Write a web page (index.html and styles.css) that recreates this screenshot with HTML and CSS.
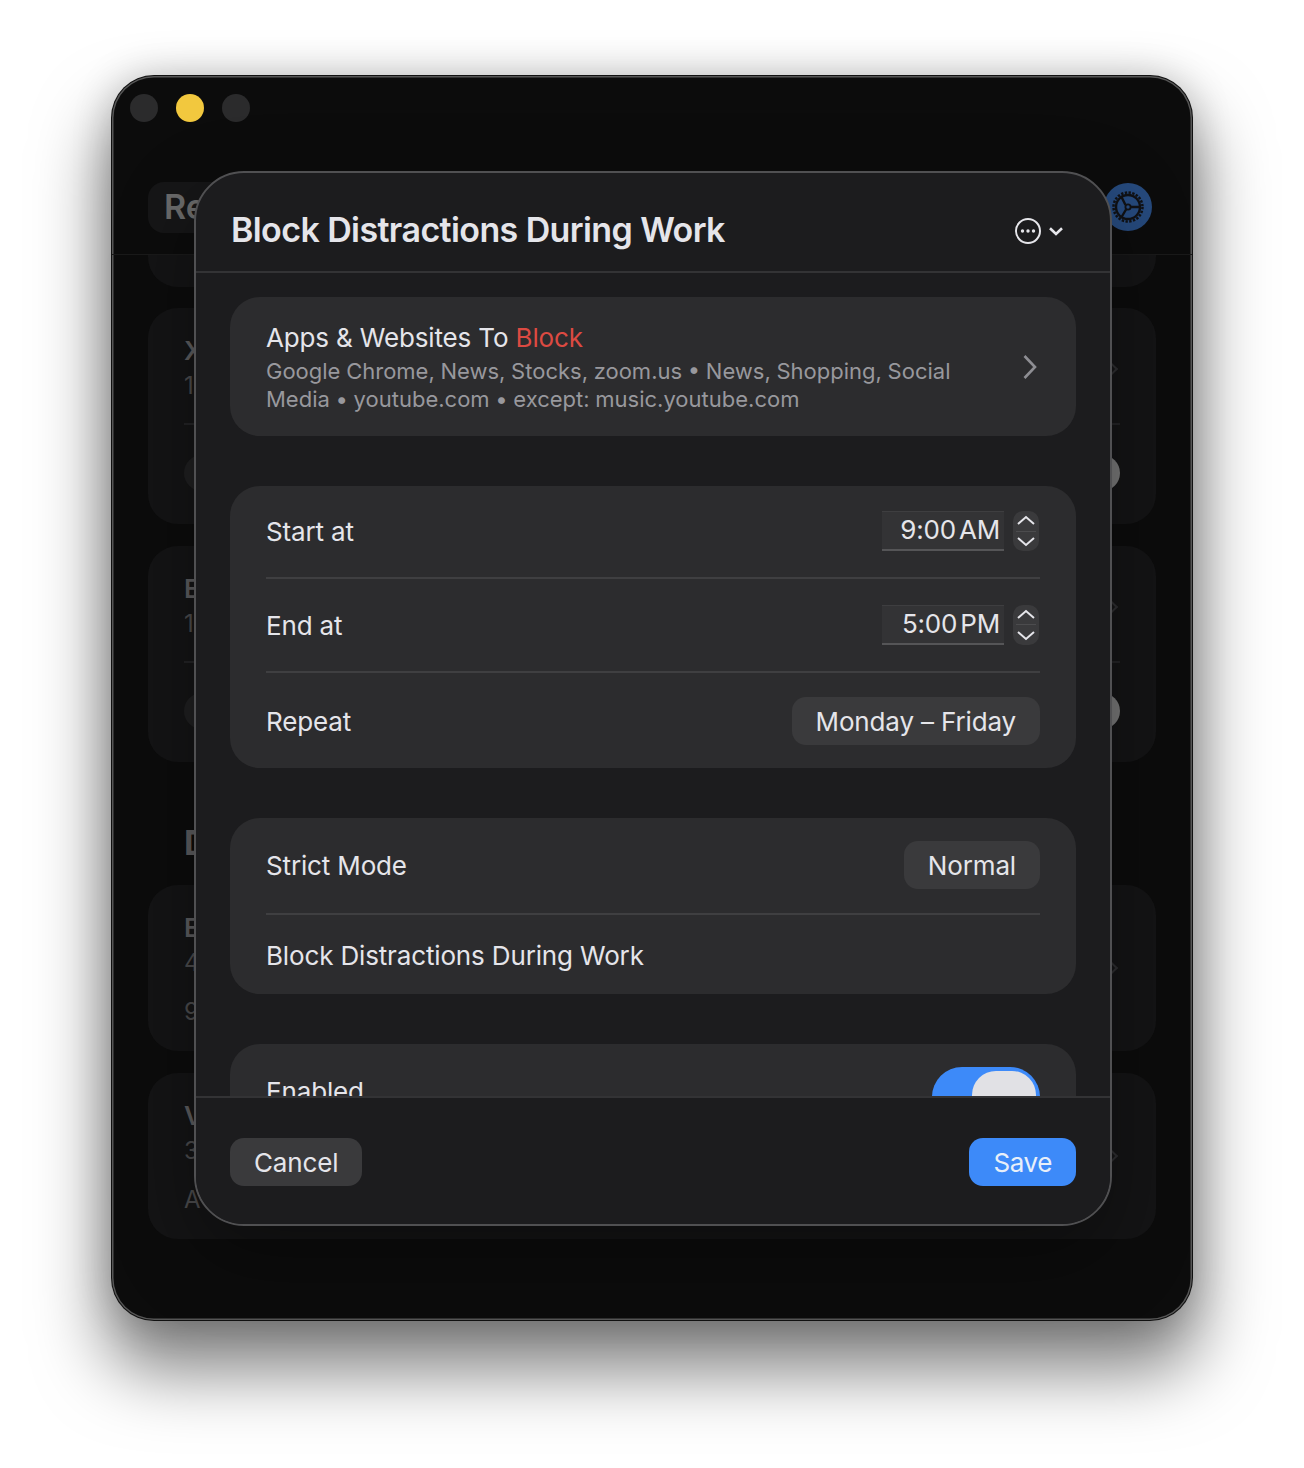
FILE: index.html
```html
<!DOCTYPE html>
<html lang="en">
<head>
<meta charset="utf-8">
<title>Block Distractions During Work</title>
<link rel="stylesheet" href="styles.css">
</head>
<body>
<div class="window">
  <div class="lights"><span class="light"></span><span class="light light-y"></span><span class="light"></span></div>
  <header class="win-head">
    <div class="pill">Re</div>
    <div class="gear">
      <svg width="36" height="36" viewBox="0 0 36 36" fill="none" stroke="#101114">
        <circle cx="18" cy="18" r="14.5" stroke-width="2.5" stroke-dasharray="2.4 1.4"/>
        <circle cx="18" cy="18" r="12" stroke-width="2.4"/>
        <circle cx="18" cy="18" r="2.6" stroke-width="1.8"/>
        <path d="M15.5 16 11 7M20.5 18H31M16 20.5 11 29" stroke-width="2.4"/>
      </svg>
    </div>
  </header>
  <main class="list">
    <div class="bg-card bg-stub"></div>
    <section class="bg-card">
      <div class="bg-main"><div><div class="bg-title">X</div><div class="bg-sub">1</div></div><i class="bg-chev"></i></div>
      <div class="bg-line"></div>
      <div class="bg-foot"><i class="bg-dot"></i><i class="bg-thumb"></i></div>
    </section>
    <section class="bg-card">
      <div class="bg-main"><div><div class="bg-title">E</div><div class="bg-sub">1</div></div><i class="bg-chev"></i></div>
      <div class="bg-line"></div>
      <div class="bg-foot"><i class="bg-dot"></i><i class="bg-thumb"></i></div>
    </section>
    <h2 class="bg-head">D</h2>
    <section class="bg-card bg-short">
      <div class="bg-main"><div><div class="bg-title">E</div><div class="bg-sub">4</div><div class="bg-sub bg-sub2">9</div></div><i class="bg-chev"></i></div>
    </section>
    <section class="bg-card bg-short">
      <div class="bg-main"><div><div class="bg-title">V</div><div class="bg-sub">3</div><div class="bg-sub bg-sub2">A</div></div><i class="bg-chev"></i></div>
    </section>
  </main>

  <div class="modal">
    <header class="m-head">
      <h1 class="m-title">Block Distractions During Work</h1>
      <div class="m-menu">
        <svg width="28" height="28" viewBox="0 0 28 28" fill="none">
          <circle cx="14" cy="14" r="12" stroke="#e5e5ea" stroke-width="2"/>
          <circle cx="8.5" cy="14" r="1.7" fill="#e5e5ea"/><circle cx="14" cy="14" r="1.7" fill="#e5e5ea"/><circle cx="19.5" cy="14" r="1.7" fill="#e5e5ea"/>
        </svg>
        <svg width="16" height="10" viewBox="0 0 16 10" fill="none"><path d="M2 2.2 8 8l6-5.8" stroke="#e5e5ea" stroke-width="2.6"/></svg>
      </div>
    </header>
    <div class="m-body">
      <section class="card card-apps">
        <div class="apps-text">
          <div class="label">Apps &amp; Websites To <span class="red">Block</span></div>
          <div class="sub">Google Chrome, News, Stocks, zoom.us • News, Shopping, Social Media • youtube.com • except: music.youtube.com</div>
        </div>
        <svg class="apps-chev" width="16" height="26" viewBox="0 0 16 26" fill="none"><path d="M2.5 2 13 13 2.5 24" stroke="#8e8e93" stroke-width="2.6"/></svg>
      </section>

      <section class="card">
        <div class="row row-time">
          <span class="label">Start at</span>
          <div class="stepper-wrap">
            <div class="time">9:00 AM</div>
            <div class="stepper">
              <svg width="18" height="14" viewBox="0 0 18 14" fill="none"><path d="M1 11 9 4l8 7" stroke="#e5e5ea" stroke-width="2"/></svg>
              <i class="stepper-line"></i>
              <svg width="18" height="14" viewBox="0 0 18 14" fill="none"><path d="M1 3l8 7 8-7" stroke="#e5e5ea" stroke-width="2"/></svg>
            </div>
          </div>
        </div>
        <div class="row row-time">
          <span class="label">End at</span>
          <div class="stepper-wrap">
            <div class="time">5:00 PM</div>
            <div class="stepper">
              <svg width="18" height="14" viewBox="0 0 18 14" fill="none"><path d="M1 11 9 4l8 7" stroke="#e5e5ea" stroke-width="2"/></svg>
              <i class="stepper-line"></i>
              <svg width="18" height="14" viewBox="0 0 18 14" fill="none"><path d="M1 3l8 7 8-7" stroke="#e5e5ea" stroke-width="2"/></svg>
            </div>
          </div>
        </div>
        <div class="row row-repeat">
          <span class="label">Repeat</span>
          <button class="btn">Monday – Friday</button>
        </div>
      </section>

      <section class="card">
        <div class="row row-strict">
          <span class="label">Strict Mode</span>
          <button class="btn">Normal</button>
        </div>
        <div class="row row-name">
          <span class="label">Block Distractions During Work</span>
        </div>
      </section>

      <section class="card card-enabled">
        <div class="row row-enabled">
          <span class="label">Enabled</span>
          <div class="toggle"><i class="knob"></i></div>
        </div>
      </section>
    </div>
    <footer class="m-foot">
      <button class="btn btn-foot">Cancel</button>
      <button class="btn btn-foot btn-save">Save</button>
    </footer>
  </div>
</div>
</body>
</html>
```
FILE: styles.css
```css
* { box-sizing: border-box; }
html, body { margin: 0; background: #fff; }
body { width: 1304px; height: 1468px; padding: 76px 112px 0; font-family: Inter, "Liberation Sans", sans-serif; overflow: hidden; }

.window {
  position: relative;
  width: 1080px;
  height: 1244px;
  background: #0c0c0c;
  border-radius: 42px;
  display: flex;
  flex-direction: column;
  box-shadow: 0 0 0 1px #111, inset 0 0 0 1.5px #565656, 0 44px 70px 6px rgba(0,0,0,.5), 0 0 40px rgba(0,0,0,.2);
}
.lights { display: flex; gap: 18px; padding: 18px 0 0 18px; height: 58px; }
.light { width: 28px; height: 28px; border-radius: 50%; background: #2b2b2c; }
.light-y { background: #f2c83e; }

.win-head { height: 121px; padding: 48px 40px 0 36px; display: flex; justify-content: space-between; align-items: flex-start; border-bottom: 1px solid #1a1a1a; }
.pill { width: 200px; height: 51px; padding-left: 16px; border-radius: 16px; background: #161617; color: #6a6a6a; font-size: 34px; font-weight: 600; line-height: 50px; }
.gear { width: 48px; height: 48px; margin-top: 1px; border-radius: 50%; background: #264a7d; display: flex; align-items: center; justify-content: center; }

.list { flex: 1; padding: 0 36px; display: flex; flex-direction: column; gap: 22px; overflow: hidden; border-radius: 0 0 42px 42px; margin-bottom: 2px; }
.bg-card { flex: none; background: #141415; border-radius: 30px; padding: 29px 36px 0; height: 216px; }
.bg-stub { height: 100px; margin-top: -68px; margin-bottom: -1px; }
.bg-short { height: 166px; }
.bg-main { display: flex; justify-content: space-between; align-items: center; height: 63px; }
.bg-title { font-size: 26px; font-weight: 600; line-height: 28px; color: #5c5c5e; }
.bg-sub { font-size: 24px; line-height: 28px; margin-top: 7px; color: #4a4a4c; }
.bg-sub2 { margin-top: 21px; }
.bg-chev { width: 10px; height: 10px; border: solid #2e2e30; border-width: 2px 2px 0 0; transform: rotate(45deg); margin-right: 4px; }
.bg-short .bg-main { height: 111px; }
.bg-short .bg-chev { margin-top: -3px; }
.bg-line { height: 2px; background: #232325; margin-top: 23px; }
.bg-foot { display: flex; justify-content: space-between; margin-top: 30px; }
.bg-dot { width: 36px; height: 36px; border-radius: 50%; background: #1f1f20; }
.bg-thumb { width: 60px; height: 36px; border-radius: 18px; background: #777; }
.bg-head { margin: 38px 0 -1px; font-size: 34px; font-weight: 700; line-height: 42px; color: #5c5c5e; padding-left: 36px; height: 42px; }

.modal {
  position: absolute;
  left: 82px;
  top: 95px;
  width: 918px;
  height: 1055px;
  display: flex;
  flex-direction: column;
  background: #1c1c1e;
  border: 2px solid #505052;
  border-radius: 50px;
  overflow: hidden;
  color: #e5e5ea;
  box-shadow: 0 30px 80px rgba(0,0,0,.35);
}
.m-head { flex: none; height: 100px; padding: 0 46px 0 35px; display: flex; align-items: center; justify-content: space-between; border-bottom: 2px solid #333335; }
.m-title { margin: 0; font-size: 34px; font-weight: 600; letter-spacing: -.6px; line-height: 114px; height: 98px; }
.m-menu { display: flex; align-items: center; gap: 6px; margin-top: 18px; }
.m-body { flex: 1; min-height: 0; overflow: hidden; padding: 24px 34px 0; display: flex; flex-direction: column; gap: 50px; }
.card { flex: none; background: #2c2c2e; border-radius: 30px; padding: 0 36px; }
.card-apps { height: 139px; display: flex; align-items: center; justify-content: space-between; }
.apps-text { width: 720px; padding-top: 2px; }
.label { font-size: 26px; line-height: 32px; letter-spacing: -.15px; }
.red { color: #dc4a42; }
.sub { margin-top: 3px; font-size: 22px; line-height: 28px; word-spacing: -.5px; color: #98989d; }
.apps-chev { margin-right: 2px; }
.row { display: flex; align-items: center; justify-content: space-between; }
.row-time { height: 93px; border-bottom: 2px solid #3f3f41; padding-top: 2px; }
.row-time:first-child { padding-top: 0; }
.row-time:first-child .stepper-wrap { margin-top: -1px; }
.row-time + .row-time { height: 94px; }
.row-repeat { height: 95px; }
.row-repeat .label { margin-top: 2px; }
.row-strict { height: 97px; border-bottom: 2px solid #3f3f41; padding-bottom: 2px; }
.row-strict .label { margin-top: 2px; }
.row-name { height: 79px; padding-top: 3px; }
.row-enabled { height: 100px; align-items: flex-start; padding-top: 23px; }
.row-enabled .label { margin-top: 9px; }
.stepper-wrap { display: flex; gap: 9px; margin: -3px 1px 0 0; }
.time { width: 122px; height: 40px; background: #333335; border-top: 1px solid #3e3e40; border-bottom: 2px solid #555557; padding-right: 4px; text-align: right; font-size: 26px; line-height: 36px; letter-spacing: -.2px; word-spacing: -4px; }
.stepper { width: 26px; height: 40px; border-radius: 10px; background: #3a3a3c; display: flex; flex-direction: column; align-items: center; justify-content: space-between; padding: 2px 0; }
.stepper-line { width: 20px; height: 1px; background: #4c4c4e; }
.btn { font: inherit; font-size: 26px; line-height: 32px; letter-spacing: -.15px; height: 48px; padding: 1px 24px 0; border: 0; border-radius: 14px; background: #3a3a3c; color: #e5e5ea; }
.row .btn { padding-top: 3px; }
.toggle { width: 108px; height: 64px; border-radius: 30px; background: #3d8af9; padding: 4px; display: flex; justify-content: flex-end; }
.knob { width: 64px; height: 56px; border-radius: 24px; background: #e1e1e5; }
.m-foot { flex: none; height: 128px; padding: 40px 34px 0; display: flex; justify-content: space-between; align-items: flex-start; border-top: 2px solid #333335; background: #1c1c1e; }
.btn-save { background: #3d8af9; color: #e8eff9; letter-spacing: -.4px; }
```
